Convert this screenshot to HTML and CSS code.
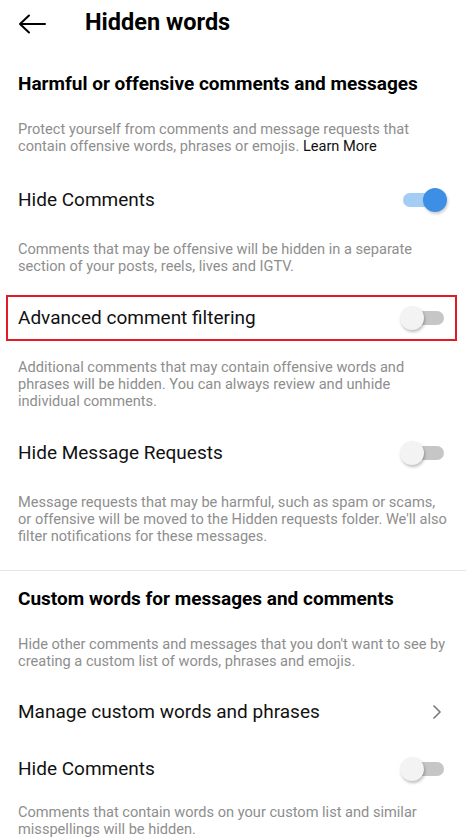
FILE: index.html
```html
<!DOCTYPE html>
<html>
<head>
<meta charset="utf-8">
<link rel="stylesheet" href="styles.css">
</head>
<body>
<div class="page">
  <header class="topbar">
    <svg class="back" width="28" height="20" viewBox="0 0 28 20"><path d="M27 10H2M11 1.5L2 10l9 8.5" fill="none" stroke="#000" stroke-width="2" stroke-linecap="round" stroke-linejoin="round"/></svg>
    <h1 class="title">Hidden words</h1>
  </header>

  <section class="section">
    <h2 class="heading">Harmful or offensive comments and messages</h2>
    <p class="desc d-intro">Protect yourself from comments and message requests that<br>contain offensive words, phrases or emojis. <span class="link">Learn More</span></p>
    <div class="row r1"><span class="label">Hide Comments</span><span class="toggle on"><span class="knob"></span></span></div>
    <p class="desc">Comments that may be offensive will be hidden in a separate<br>section of your posts, reels, lives and IGTV.</p>
    <div class="row highlight"><span class="label">Advanced comment filtering</span><span class="toggle"><span class="knob"></span></span></div>
    <p class="desc">Additional comments that may contain offensive words and<br>phrases will be hidden. You can always review and unhide<br>individual comments.</p>
    <div class="row"><span class="label">Hide Message Requests</span><span class="toggle"><span class="knob"></span></span></div>
    <p class="desc">Message requests that may be harmful, such as spam or scams,<br>or offensive will be moved to the Hidden requests folder. We'll also<br>filter notifications for these messages.</p>
  </section>

  <section class="section bordered">
    <h2 class="heading">Custom words for messages and comments</h2>
    <p class="desc d-intro">Hide other comments and messages that you don't want to see by<br>creating a custom list of words, phrases and emojis.</p>
    <div class="row r-manage"><span class="label">Manage custom words and phrases</span>
      <svg class="chev" width="10" height="16" viewBox="0 0 10 16"><path d="M1.5 1.5L8 8l-6.5 6.5" fill="none" stroke="#777" stroke-width="1.5"/></svg>
    </div>
    <div class="row r-last"><span class="label">Hide Comments</span><span class="toggle"><span class="knob"></span></span></div>
    <p class="desc d-last">Comments that contain words on your custom list and similar<br>misspellings will be hidden.</p>
  </section>
</div>
</body>
</html>
```

FILE: styles.css
```css
html, body {
  margin: 0;
  padding: 0;
  background: #fff;
}
body {
  font-family: Roboto, "Liberation Sans", Arial, sans-serif;
  color: #000;
  overflow: hidden;
}
.page {
  width: 466px;
  height: 839px;
  overflow: hidden;
}
.topbar {
  height: 44px;
  display: flex;
  align-items: center;
  padding-left: 18px;
}
.back {
  display: block;
  margin-top: 3px;
}
.title {
  margin: 0 0 0 39px;
  font-size: 23.5px;
  font-weight: 700;
  line-height: 24px;
}
.section {
  padding: 28px 0 0;
}
.section.bordered {
  border-top: 1px solid #e6e6e6;
  margin-top: 25px;
  padding-top: 16px;
}
.heading {
  margin: 0;
  padding: 0 18px;
  font-size: 19px;
  font-weight: 700;
  line-height: 24px;
}
.desc {
  margin: 18px 0 0;
  padding: 0 0 0 18px;
  font-size: 14.6px;
  line-height: 17px;
  color: #8e8e8e;
  white-space: nowrap;
}
.desc.d-intro {
  margin-top: 25px;
}
.link {
  color: #111;
}
.row {
  display: flex;
  align-items: center;
  justify-content: space-between;
  height: 46px;
  margin: 20px 0 0;
  padding: 0 22px 0 18px;
}
.row.r1 {
  margin-top: 22px;
}
.row.highlight {
  box-sizing: border-box;
  height: 46px;
  margin: 20px 9px 0 6px;
  padding: 0 11px 0 10px;
  border: 2px solid #e31b23;
}
.row.r-manage {
  margin-top: 19px;
  padding-right: 24px;
}
.row.r-last {
  margin-top: 11px;
}
.desc.d-last {
  margin-top: 12px;
}
.label {
  font-size: 19px;
  line-height: 24px;
  color: #111;
}
.toggle {
  position: relative;
  width: 41px;
  height: 14px;
  border-radius: 7px;
  background: #c6c6c6;
}
.toggle .knob {
  position: absolute;
  top: -5px;
  left: -3px;
  width: 24px;
  height: 24px;
  border-radius: 50%;
  background: #f3f3f3;
  box-shadow: 1px 2px 3px rgba(0,0,0,0.25);
}
.toggle.on {
  background: #a4cdf4;
}
.toggle.on .knob {
  left: 20px;
  background: #3c8fe5;
  box-shadow: 1px 2px 3px rgba(0,0,0,0.2);
}
.chev {
  display: block;
}
```
